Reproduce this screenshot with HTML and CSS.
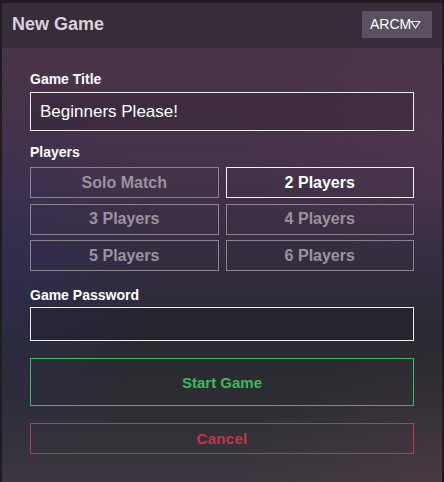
FILE: index.html
```html
<!DOCTYPE html>
<html>
<head>
<meta charset="utf-8">
<link rel="stylesheet" href="styles.css">
</head>
<body>
<div class="dialog">
  <header class="head">
    <h1 class="title">New Game</h1>
    <button class="lang">ARCM<svg class="tri" width="11" height="9" viewBox="0 0 11 9"><path d="M1 1.5 H10 L5.5 8 Z" fill="none" stroke="#fff" stroke-width="1.2" stroke-linejoin="round"/></svg></button>
  </header>
  <main class="body">
    <label class="label">Game Title</label>
    <div class="input title-input">Beginners Please!</div>
    <label class="label players-label">Players</label>
    <div class="grid">
      <div class="opt">Solo Match</div>
      <div class="opt sel">2 Players</div>
      <div class="opt">3 Players</div>
      <div class="opt">4 Players</div>
      <div class="opt">5 Players</div>
      <div class="opt">6 Players</div>
    </div>
    <label class="label pass-label">Game Password</label>
    <div class="input pass-input"></div>
    <div class="btn start">Start Game</div>
    <div class="btn cancel">Cancel</div>
  </main>
</div>
</body>
</html>
```
FILE: styles.css
```css
html, body {
  margin: 0;
  padding: 0;
  background: #211c22;
  font-family: "Liberation Sans", Arial, sans-serif;
}
.dialog {
  margin: 3px 2px 0;
  height: 479px;
  display: flex;
  flex-direction: column;
  overflow: hidden;
}
.head {
  height: 45px;
  flex: none;
  background: #382b3a;
  display: flex;
  align-items: center;
  justify-content: space-between;
  padding: 0 10px;
}
.title {
  margin: 0;
  font-size: 18px;
  font-weight: bold;
  color: #d6d3d7;
  position: relative;
  top: -1px;
}
.lang {
  width: 70px;
  height: 27px;
  border: none;
  background: #5a5060;
  color: #fff;
  font-family: "Liberation Sans", Arial, sans-serif;
  font-size: 14px;
  padding: 0 0 0 8px;
  display: flex;
  align-items: center;
  margin-top: -3px;
}
.tri { margin-left: -1px; margin-top: 1px; }
.body {
  flex: 1;
  padding: 24px 28px 0;
  background:
    radial-gradient(ellipse 160px 200px at 0% 52%, rgba(45,45,95,0.45), rgba(45,45,95,0) 100%),
    radial-gradient(ellipse 200px 140px at 100% 100%, rgba(100,65,70,0.3), rgba(100,65,70,0) 100%),
    radial-gradient(ellipse 200px 120px at 100% 20%, rgba(95,60,85,0.35), rgba(95,60,85,0) 100%),
    linear-gradient(to bottom, #4a3447 0%, #43324a 30%, #352d40 48%, #2a2a32 66%, #2c2c32 80%, #3c3740 100%);
  display: flex;
  flex-direction: column;
}
.label {
  display: block;
  font-size: 14px;
  line-height: 15px;
  font-weight: bold;
  color: #fff;
}
.input {
  margin-top: 5px;
  border: 1px solid #ececec;
  background: rgba(20,12,20,0.18);
  box-sizing: border-box;
  color: #fff;
  font-size: 17px;
  display: flex;
  align-items: center;
  padding-left: 9px;
}
.title-input { height: 39px; }
.players-label { margin-top: 14px; }
.grid {
  margin-top: 7px;
  display: grid;
  grid-template-columns: 1fr 1fr;
  grid-auto-rows: 31px;
  column-gap: 7px;
  row-gap: 5.5px;
}
.opt {
  border: 1px solid #8c8391;
  box-sizing: border-box;
  display: flex;
  align-items: center;
  justify-content: center;
  font-size: 16px;
  font-weight: bold;
  color: #9a939e;
}
.opt.sel {
  border-color: #f2f2f2;
  color: #fff;
}
.pass-label { margin-top: 17px; }
.pass-input { height: 34px; margin-top: 4px; }
.btn {
  box-sizing: border-box;
  display: flex;
  align-items: center;
  justify-content: center;
  font-size: 15px;
  font-weight: bold;
}
.start {
  margin-top: 17px;
  height: 48px;
  border: 1px solid #3cbb5a;
  color: #3cbb5a;
}
.cancel {
  margin-top: 17px;
  height: 31px;
  border: 1px solid #c7344b;
  color: #c7344b;
  letter-spacing: 0.3px;
}
```
